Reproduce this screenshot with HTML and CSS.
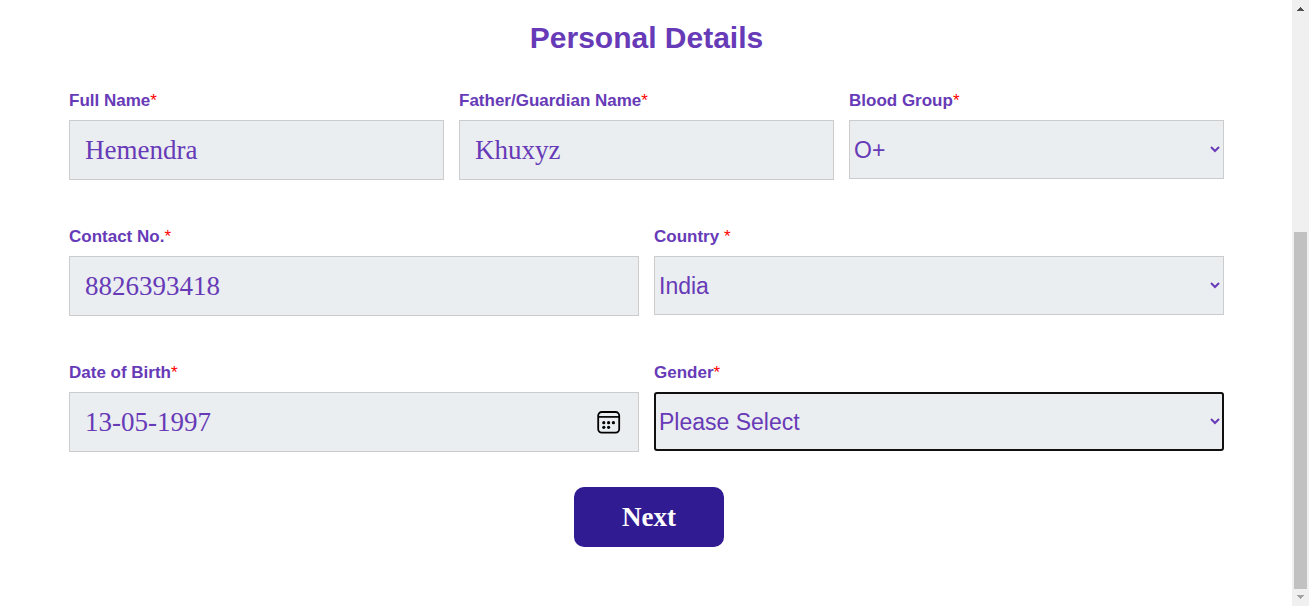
FILE: index.html
```html
<!DOCTYPE html>
<html lang="en">
<head>
<meta charset="utf-8">
<meta name="viewport" content="width=device-width, initial-scale=1">
<title>Personal Details</title>
<link rel="stylesheet" href="styles.css">
</head>
<body>
<div class="page">
  <main class="content">
    <h1 class="title">Personal Details</h1>
    <form class="form">
      <div class="row">
        <div class="field">
          <label class="label" for="full-name">Full Name<span class="required">*</span></label>
          <input class="control text-input" id="full-name" type="text" value="Hemendra">
        </div>
        <div class="field">
          <label class="label" for="guardian">Father/Guardian Name<span class="required">*</span></label>
          <input class="control text-input" id="guardian" type="text" value="Khuxyz">
        </div>
        <div class="field">
          <label class="label" for="blood">Blood Group<span class="required">*</span></label>
          <select class="control select" id="blood"><option>O+</option></select>
        </div>
      </div>
      <div class="row">
        <div class="field">
          <label class="label" for="contact">Contact No.<span class="required">*</span></label>
          <input class="control text-input" id="contact" type="tel" value="8826393418">
        </div>
        <div class="field">
          <label class="label" for="country">Country <span class="required">*</span></label>
          <select class="control select" id="country"><option>India</option></select>
        </div>
      </div>
      <div class="row">
        <div class="field">
          <label class="label" for="dob">Date of Birth<span class="required">*</span></label>
          <div class="date-box">
            <input class="control text-input" id="dob" type="text" value="13-05-1997">
            <button class="date-button" type="button" aria-label="Open calendar">
              <svg width="24" height="24" viewBox="0 0 24 24" fill="none" stroke="#000">
                <rect x="1.2" y="2" width="21" height="20.6" rx="3.5" stroke-width="1.8"/>
                <path d="M2 6.9H22" stroke-width="1.7"/>
                <g fill="#000" stroke="none">
                  <circle cx="6.8" cy="12.7" r="1.6"/><circle cx="11.6" cy="12.7" r="1.6"/><circle cx="16.4" cy="12.7" r="1.6"/>
                  <circle cx="6.8" cy="17.3" r="1.6"/><circle cx="11.6" cy="17.3" r="1.6"/>
                </g>
              </svg>
            </button>
          </div>
        </div>
        <div class="field">
          <label class="label" for="gender">Gender<span class="required">*</span></label>
          <select class="control select select-active" id="gender"><option>Please Select</option></select>
        </div>
      </div>
      <div class="actions">
        <button class="next" type="button">Next</button>
      </div>
    </form>
  </main>
  <div class="scrollbar" aria-hidden="true">
    <svg class="arrow" viewBox="0 0 17 17" fill="#505050" shape-rendering="crispEdges"><path d="M8 7h1v1h1v1h1v1h1v1H5v-1h1V9h1V8h1z"/></svg>
    <div class="track"><div class="thumb"></div></div>
    <svg class="arrow" viewBox="0 0 17 17" fill="#a3a3a3" shape-rendering="crispEdges"><path d="M5 6h7v1h-1v1h-1v1H9v1H8V9H7V8H6V7H5z"/></svg>
  </div>
</div>
</body>
</html>
```
FILE: styles.css
```css
* {
  box-sizing: border-box;
}

body {
  margin: 0;
  background: #fff;
  color: #673ab7;
  font-family: "Liberation Sans", Arial, sans-serif;
}

.page {
  display: flex;
  min-height: 100vh;
}

.content {
  flex: 1;
  min-width: 0;
  padding: 20px 68px 32px 69px;
}

.title {
  margin: 0 0 32px;
  font-size: 30px;
  line-height: 36px;
  text-align: center;
}

.form {
  display: flex;
  flex-direction: column;
  gap: 44px;
}

.row {
  display: flex;
  gap: 15px;
}

.field {
  flex: 1 1 0;
  min-width: 0;
  display: flex;
  flex-direction: column;
  gap: 6px;
}

.label {
  font-size: 17px;
  font-weight: 700;
  line-height: 26px;
}

.required {
  color: #f00;
  font-weight: 400;
}

.control {
  width: 100%;
  margin: 0;
  border: 1px solid #ccc;
  border-radius: 0;
  background-color: #ebeef1;
  color: #673ab7;
}

.text-input {
  height: 60px;
  padding: 0 15px;
  font-family: "Liberation Serif", "Times New Roman", serif;
  font-size: 27px;
}

.select {
  height: 59px;
  padding: 0;
  font-family: "Liberation Sans", Arial, sans-serif;
  font-size: 23px;
}

.select-active {
  border-radius: 3px;
  outline: 2px solid #101010;
  outline-offset: -2px;
}

.date-box {
  position: relative;
}

.date-box .control {
  display: block;
}

.date-button {
  position: absolute;
  top: 0;
  right: 18px;
  height: 60px;
  padding: 0;
  border: 0;
  background: none;
}

.date-button svg {
  display: block;
}

.actions {
  display: flex;
  justify-content: center;
  margin-top: -9px;
  padding-left: 5px;
}

.next {
  width: 150px;
  height: 60px;
  border: 0;
  border-radius: 10px;
  background: #311b92;
  color: #fff;
  font-family: "Liberation Serif", "Times New Roman", serif;
  font-size: 27px;
  font-weight: 700;
}

.scrollbar {
  position: sticky;
  top: 0;
  display: flex;
  flex-direction: column;
  width: 17px;
  height: 100vh;
  background: #f0f0f0;
}

.arrow {
  flex: none;
  width: 17px;
  height: 17px;
}

.track {
  flex: 1;
  display: flex;
  flex-direction: column;
  justify-content: flex-end;
  padding: 0 2px;
}

.thumb {
  height: 62.4%;
  background: #c1c1c1;
}
```
